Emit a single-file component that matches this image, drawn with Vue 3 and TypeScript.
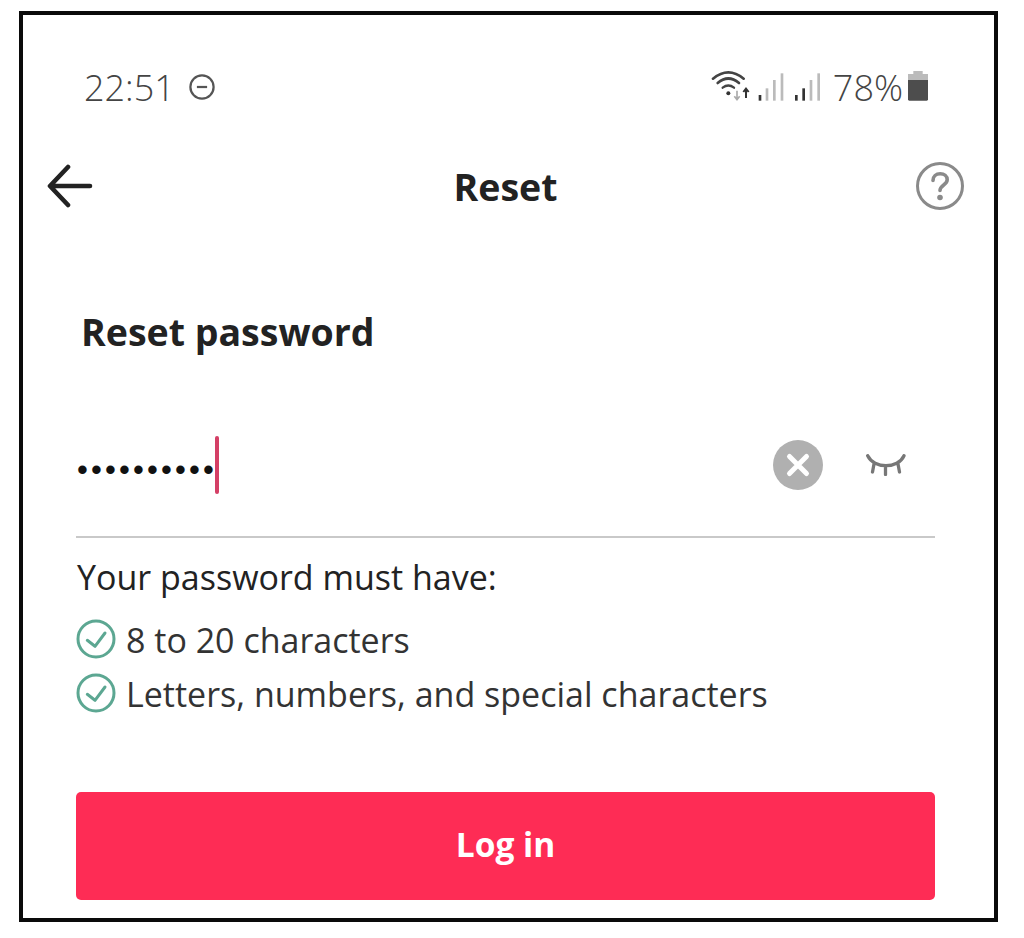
<template>
  <div class="frame">
    <div class="status">
      <div class="status-left">
        <span class="clock">22:51</span>
        <svg class="dnd" viewBox="0 0 28 28">
          <circle cx="14" cy="14" r="12.500" fill="none" stroke="#555" stroke-width="2.400" />
          <path d="M8.500 14h11" stroke="#555" stroke-width="2.400" />
        </svg>
      </div>
      <div class="status-right">
        <svg class="signal" viewBox="60 204 340 120">
          <g fill="none" stroke="#444" stroke-linecap="round">
            <path d="M66 236Q112 198 158 236" stroke-width="8" />
            <path d="M80 249Q112 222 144 249" stroke-width="8" />
            <path d="M95 263Q112 250 129 263" stroke-width="7" />
          </g>
          <circle cx="112" cy="280" r="6" fill="#333" />
          <path d="M138 272v26M130 289l8 10 8-10" fill="none" stroke="#aaa" stroke-width="5" />
          <path d="M165 294v-26M157 276l8-10 8 10" fill="none" stroke="#333" stroke-width="6" />
          <rect v-for="bar in bars" :key="bar.x" :x="bar.x" :y="bar.y" width="8" :height="302 - bar.y" :fill="bar.fill" />
        </svg>
        <span class="percent">78%</span>
        <svg class="battery" viewBox="655 204 60 120">
          <path d="M671 213h28v9h16v18h-60v-18h16z" fill="#bbb" />
          <path d="M655 240h60v58q0 4-4 4h-52q-4 0-4-4z" fill="#4d4d4d" />
        </svg>
      </div>
    </div>

    <div class="nav">
      <svg class="back" viewBox="0 0 46 44">
        <path d="M43 22H4M21 3 3 22l18 19" fill="none" stroke="#222" stroke-width="4.600" stroke-linecap="round" stroke-linejoin="round" />
      </svg>
      <h1>Reset</h1>
      <svg class="help" viewBox="0 0 48 48">
        <circle cx="24" cy="24" r="22.500" fill="none" stroke="#8a8a8a" stroke-width="3" />
        <path d="M17 18.500c0-4.300 3.200-6.800 7.200-6.800 4 0 7 2.400 7 6 0 5.300-7.200 5.200-7.200 10.800" fill="none" stroke="#8a8a8a" stroke-width="3.600" stroke-linecap="round" />
        <circle cx="24" cy="35.500" r="2.800" fill="#8a8a8a" />
      </svg>
    </div>

    <div class="content">
      <h2>Reset password</h2>

      <div class="field">
        <span class="dots">••••••••••</span>
        <span class="caret"></span>
        <svg class="clear" viewBox="0 0 50 50">
          <circle cx="25" cy="25" r="25" fill="#b0b0b0" />
          <path d="M16.500 16.500l17 17M33.500 16.500l-17 17" stroke="#fff" stroke-width="5" stroke-linecap="round" />
        </svg>
        <svg class="eye" viewBox="0 0 40 22">
          <path d="M1.700 1.700C8 15 32 15 38 1.700M8 10 6.500 18M19.500 13V20.500M32 10 33.500 18" fill="none" stroke="#777" stroke-width="3.300" stroke-linecap="round" />
        </svg>
      </div>

      <p class="rules-title">Your password must have:</p>
      <ul class="rules">
        <li v-for="rule in rules" :key="rule">
          <svg viewBox="0 0 40 40">
            <circle cx="20" cy="20" r="18" fill="none" stroke="#5ca792" stroke-width="3" />
            <path d="M11.300 21.300l7.700 6L29 14" fill="none" stroke="#5ca792" stroke-width="3" stroke-linecap="round" stroke-linejoin="round" />
          </svg>
          <span>{{ rule }}</span>
        </li>
      </ul>

      <button type="button" class="login">Log in</button>
    </div>
  </div>
</template>

<script setup lang="ts">
const rules: string[] = ['8 to 20 characters', 'Letters, numbers, and special characters']

const bars = [
  { x: 203, y: 285, fill: '#333' },
  { x: 224, y: 265, fill: '#bbb' },
  { x: 246, y: 240, fill: '#bbb' },
  { x: 269, y: 220, fill: '#bbb' },
  { x: 312, y: 285, fill: '#333' },
  { x: 334, y: 265, fill: '#333' },
  { x: 356, y: 240, fill: '#bbb' },
  { x: 379, y: 220, fill: '#bbb' },
]
</script>

<style scoped>
.frame {
  width: 979px;
  height: 911px;
  margin: 11px 0 0 19px;
  border: 4px solid #0a0a0a;
  box-sizing: border-box;
  font-family: "Open Sans", sans-serif;
  color: #222;
  background: #fff;
}

.status {
  display: flex;
  justify-content: space-between;
  align-items: center;
  height: 40px;
  margin-top: 53px;
  padding: 0 66px 0 61px;
  font-family: "Open Sans", sans-serif;
  font-weight: 300;
  font-size: 36px;
  color: #444;
}

.status-left,
.status-right {
  display: flex;
  align-items: center;
}

.clock,
.percent {
  margin-top: -2px;
}

.dnd {
  width: 26px;
  height: 26px;
  margin: -3px 0 0 14px;
}

.signal {
  width: 113.33px;
  height: 40px;
}

.percent {
  margin-left: 9px;
}

.battery {
  width: 20px;
  height: 40px;
  margin-left: 5px;
}

.nav {
  display: grid;
  grid-template-columns: 1fr auto 1fr;
  align-items: center;
  height: 60px;
  margin-top: 48px;
  padding: 0 30px 0 24px;
}

.nav h1 {
  margin: 0;
  font-size: 37.500px;
  font-weight: 700;
}

.back {
  width: 46px;
  height: 44px;
}

.help {
  width: 48px;
  height: 48px;
  justify-self: end;
}

.content {
  padding: 0 59px 0 53px;
}

.content h2 {
  height: 50px;
  margin: 91px 0 0 5px;
  font-size: 37.500px;
  font-weight: 700;
  line-height: 50px;
}

.field {
  display: flex;
  align-items: center;
  height: 131px;
  margin-top: 50px;
  padding-bottom: 14px;
  border-bottom: 2px solid #c9c9c9;
  box-sizing: border-box;
}

.dots {
  width: 139px;
  margin-top: 10px;
  padding-left: 1px;
  box-sizing: border-box;
  font-family: "Liberation Sans", sans-serif;
  font-size: 31px;
  letter-spacing: 3.150px;
  white-space: nowrap;
  color: #111;
}

.caret {
  width: 4px;
  height: 58px;
  border-radius: 2px;
  background: #d43f66;
}

.clear {
  width: 50px;
  height: 50px;
  margin-left: auto;
}

.eye {
  width: 40px;
  height: 22px;
  margin: 0 29px 0 43px;
}

.rules-title {
  margin: 18px 0 0 1px;
  font-size: 34px;
  line-height: 42px;
}

.rules {
  margin: 15px 0 0;
  padding: 0;
  list-style: none;
  font-size: 34px;
  color: #333;
}

.rules li {
  display: flex;
  align-items: center;
  gap: 10px;
  height: 54px;
}

.rules svg {
  width: 40px;
  height: 40px;
  margin-top: -2px;
}

.login {
  display: block;
  width: 100%;
  height: 108px;
  margin-top: 71px;
  padding-bottom: 6px;
  border: none;
  border-radius: 5px;
  background: #fe2c55;
  color: #fff;
  font-family: inherit;
  font-size: 33.500px;
  font-weight: 700;
}
</style>
